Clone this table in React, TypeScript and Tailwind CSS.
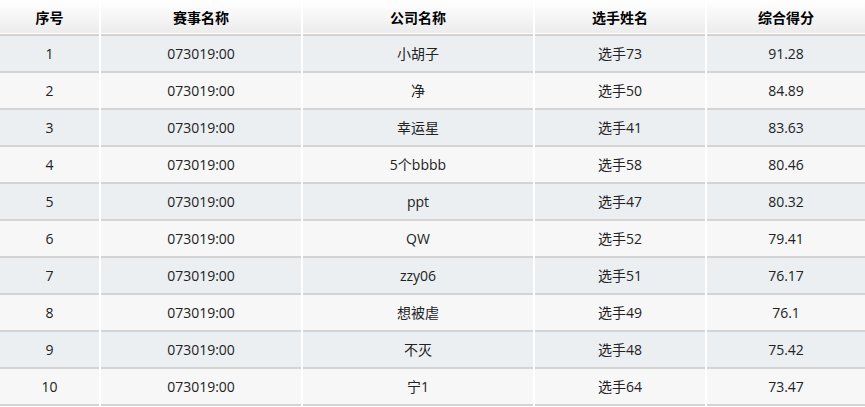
const rows = [
  { id: 1, match: "073019:00", company: "小胡子", player: "选手73", score: "91.28" },
  { id: 2, match: "073019:00", company: "净", player: "选手50", score: "84.89" },
  { id: 3, match: "073019:00", company: "幸运星", player: "选手41", score: "83.63" },
  { id: 4, match: "073019:00", company: "5个bbbb", player: "选手58", score: "80.46" },
  { id: 5, match: "073019:00", company: "ppt", player: "选手47", score: "80.32" },
  { id: 6, match: "073019:00", company: "QW", player: "选手52", score: "79.41" },
  { id: 7, match: "073019:00", company: "zzy06", player: "选手51", score: "76.17" },
  { id: 8, match: "073019:00", company: "想被虐", player: "选手49", score: "76.1" },
  { id: 9, match: "073019:00", company: "不灭", player: "选手48", score: "75.42" },
  { id: 10, match: "073019:00", company: "宁1", player: "选手64", score: "73.47" },
];

const headers = ["序号", "赛事名称", "公司名称", "选手姓名", "综合得分"];
const widths = ["w-[100px]", "w-[202px]", "w-[232px]", "w-[172px]", "w-[159px]"];

export default function App() {
  return (
    <div className="w-[865px] bg-white font-['Open_Sans','Noto_Sans_CJK_SC',sans-serif] text-[14px] text-[#222]">
      <table className="w-full table-fixed border-collapse">
        <colgroup>
          {widths.map((w, i) => (
            <col key={i} className={w} />
          ))}
        </colgroup>
        <thead>
          <tr className="h-[35px] bg-gradient-to-b from-white to-[#ececec] border-b-2 border-[#d2d2d2]">
            {headers.map((h) => (
              <th key={h} className="border-x-2 border-white font-bold text-black text-center first:border-l-0 last:border-r-0">
                {h}
              </th>
            ))}
          </tr>
        </thead>
        <tbody>
          {rows.map((r, i) => (
            <tr
              key={r.id}
              className={`h-[37px] border-b-2 border-[#d4d4d4] ${i % 2 === 0 ? "bg-[#ebeff2]" : "bg-[#f7f7f7]"}`}
            >
              {[r.id, r.match, r.company, r.player, r.score].map((v, j) => (
                <td key={j} className="border-x-2 border-white text-center first:border-l-0 last:border-r-0">
                  {v}
                </td>
              ))}
            </tr>
          ))}
        </tbody>
      </table>
    </div>
  );
}
